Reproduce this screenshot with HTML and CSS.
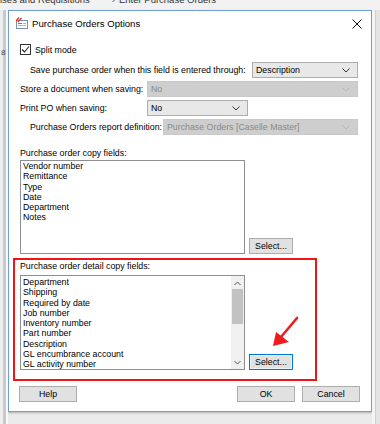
FILE: index.html
```html
<!DOCTYPE html>
<html lang="en">

<head>
    <meta charset="UTF-8">
    <meta name="viewport" content="width=device-width, initial-scale=1.0">
    <link rel="stylesheet" href="styles.css">
</head>

<body>
    <div class="app">
        <div class="crumbs">
            <span>ises and Requisitions</span>
            <span class="sep">›</span>
            <span>Enter Purchase Orders</span>
        </div>
        <div class="desk">
            <div class="side-left"><span class="side-num">8</span></div>

            <div class="dialog">
                <div class="titlebar">
                    <svg class="app-icon" width="13" height="12" viewBox="0 0 13 12">
                        <rect x="1.5" y="3.5" width="11" height="8" fill="#fff" stroke="#7b8fae" />
                        <line x1="3" y1="6.5" x2="7" y2="6.5" stroke="#4d7cc4" />
                        <line x1="3" y1="8.5" x2="11" y2="8.5" stroke="#9fb6d8" />
                        <line x1="8" y1="6.5" x2="11" y2="6.5" stroke="#9fb6d8" />
                        <line x1="1" y1="4" x2="4" y2="0.5" stroke="#d9342b" stroke-width="1.2" />
                        <line x1="3" y1="5" x2="6.5" y2="1" stroke="#d9342b" stroke-width="1.2" />
                    </svg>
                    <span class="title">Purchase Orders Options</span>
                    <svg class="close" width="10" height="10" viewBox="0 0 10 10">
                        <path d="M0.5 0.5 L9.5 9.5 M9.5 0.5 L0.5 9.5" stroke="#111" stroke-width="1" />
                    </svg>
                </div>

                <div class="content">
                    <div class="check-row">
                        <span class="checkbox">
                            <svg width="9" height="9" viewBox="0 0 9 9">
                                <path d="M1 4.5 L3.5 7 L8 1.5" fill="none" stroke="#222" stroke-width="1.1" />
                            </svg>
                        </span>
                        <span>Split mode</span>
                    </div>

                    <div class="field-row indent">
                        <label class="label-save">Save purchase order when this field is entered through:</label>
                        <div class="combo combo-save">
                            <span>Description</span>
                            <svg class="chev" width="8" height="5" viewBox="0 0 8 5">
                                <path d="M0.5 0.5 L4 4 L7.5 0.5" fill="none" stroke="#333" />
                            </svg>
                        </div>
                    </div>

                    <div class="field-row">
                        <label class="label-store">Store a document when saving:</label>
                        <div class="combo combo-store disabled">
                            <span>No</span>
                            <svg class="chev" width="8" height="5" viewBox="0 0 8 5">
                                <path d="M0.5 0.5 L4 4 L7.5 0.5" fill="none" stroke="#b8b8b8" />
                            </svg>
                        </div>
                    </div>

                    <div class="field-row">
                        <label class="label-store">Print PO when saving:</label>
                        <div class="combo combo-print">
                            <span>No</span>
                            <svg class="chev" width="8" height="5" viewBox="0 0 8 5">
                                <path d="M0.5 0.5 L4 4 L7.5 0.5" fill="none" stroke="#333" />
                            </svg>
                        </div>
                    </div>

                    <div class="field-row indent">
                        <label class="label-report">Purchase Orders report definition:</label>
                        <div class="combo combo-report disabled">
                            <span>Purchase Orders [Caselle Master]</span>
                            <svg class="chev" width="8" height="5" viewBox="0 0 8 5">
                                <path d="M0.5 0.5 L4 4 L7.5 0.5" fill="none" stroke="#b8b8b8" />
                            </svg>
                        </div>
                    </div>

                    <div class="group-label copy-label">Purchase order copy fields:</div>
                    <div class="list-group">
                        <ul class="listbox">
                            <li>Vendor number</li>
                            <li>Remittance</li>
                            <li>Type</li>
                            <li>Date</li>
                            <li>Department</li>
                            <li>Notes</li>
                        </ul>
                        <button class="btn btn-select">Select...</button>
                    </div>

                    <div class="highlight">
                        <div class="group-label">Purchase order detail copy fields:</div>
                        <div class="list-group detail">
                            <div class="listbox scrolled">
                                <ul class="items">
                                    <li>Department</li>
                                    <li>Shipping</li>
                                    <li>Required by date</li>
                                    <li>Job number</li>
                                    <li>Inventory number</li>
                                    <li>Part number</li>
                                    <li>Description</li>
                                    <li>GL encumbrance account</li>
                                    <li>GL activity number</li>
                                </ul>
                                <div class="scrollbar">
                                    <svg width="7" height="5" viewBox="0 0 7 5">
                                        <path d="M0.5 4 L3.5 1 L6.5 4" fill="none" stroke="#555" />
                                    </svg>
                                    <div class="track"><div class="thumb"></div></div>
                                    <svg width="7" height="5" viewBox="0 0 7 5">
                                        <path d="M0.5 1 L3.5 4 L6.5 1" fill="none" stroke="#555" />
                                    </svg>
                                </div>
                            </div>
                            <button class="btn btn-select focused">Select...</button>
                        </div>
                        <svg class="arrow" width="32" height="36" viewBox="0 0 32 36">
                            <line x1="29" y1="4" x2="13" y2="23" stroke="#ee1c1c" stroke-width="2.6" stroke-linecap="round" />
                            <polygon points="5,32 8,18 21,28" fill="#ee1c1c" />
                        </svg>
                    </div>

                    <div class="actions">
                        <button class="btn btn-wide">Help</button>
                        <div class="actions-right">
                            <button class="btn btn-wide">OK</button>
                            <button class="btn btn-wide">Cancel</button>
                        </div>
                    </div>
                </div>
            </div>

            <div class="side-right"></div>
        </div>
    </div>
</body>

</html>
```

FILE: styles.css
```css
:root {
    --text-color: #000;
    --border-color: #adadad;
    --button-bg: #e1e1e1;
    --combo-bg: #e8e8e8;
    --disabled-bg: #cecece;
    --disabled-text: #8a8a8a;
    --frame-color: #6f9fd6;
    --mark-color: #f01414;
}

* {
    margin: 0;
    padding: 0;
    box-sizing: border-box;
}

body {
    font-family: "Liberation Sans", Arial, sans-serif;
    font-size: 8.8px;
    color: var(--text-color);
    background: #ebebeb;
    width: 380px;
    height: 424px;
    overflow: hidden;
}

.app {
    display: flex;
    flex-direction: column;
    height: 424px;
}

.crumbs {
    height: 10px;
    overflow: hidden;
    display: flex;
    gap: 26px;
    font-size: 9.5px;
    line-height: 10px;
    color: #333;
    background: #f2f2f2;
}

.crumbs span {
    margin-top: -5px;
}

.crumbs .sep {
    margin-left: -4px;
    margin-right: -22px;
}

.desk {
    flex: 1;
    display: flex;
    align-items: flex-start;
}

.side-left {
    width: 8px;
    height: 100%;
    background: #eeeeee;
    border-right: 2px solid #f8f8f8;
    box-shadow: inset -3px 0 0 #c9c9c9;
    position: relative;
}

.side-num {
    position: absolute;
    top: 38px;
    left: 1px;
    font-size: 8px;
    color: #444;
}

.side-right {
    flex: 1;
    height: 100%;
    background: #e4e4e4;
    border-left: 3px solid #f4f4f4;
    box-shadow: inset 1px 0 0 #cfcfcf;
}

.dialog {
    width: 364px;
    height: 402px;
    background: #fff;
    border: 1px solid var(--frame-color);
    box-shadow: 0 1px 2px rgba(0, 0, 0, 0.25);
    display: flex;
    flex-direction: column;
}

.titlebar {
    height: 24px;
    display: flex;
    align-items: center;
    padding: 0 9px 0 6px;
    gap: 4px;
}

.title {
    flex: 1;
    font-size: 9.6px;
    padding-top: 1px;
}

.close {
    margin-top: 1px;
}

.content {
    padding: 0 13px 0 11px;
    display: flex;
    flex-direction: column;
}

.check-row {
    margin-top: 8px;
    height: 13px;
    display: flex;
    align-items: center;
    gap: 4px;
}

.checkbox {
    width: 11px;
    height: 11px;
    border: 1px solid #333;
    display: flex;
    align-items: center;
    justify-content: center;
    background: #fff;
}

.field-row {
    margin-top: 3px;
    height: 16px;
    display: flex;
    align-items: center;
}

.check-row + .field-row {
    margin-top: 6px;
}

.field-row.indent {
    padding-left: 10px;
}

.label-save {
    width: 222px;
}

.label-store {
    width: 127px;
}

.label-report {
    width: 133px;
}

.combo {
    height: 16px;
    display: flex;
    align-items: center;
    justify-content: space-between;
    padding: 0 7px 0 3px;
    border: 1px solid var(--border-color);
    background: var(--combo-bg);
}

.combo.disabled {
    background: var(--disabled-bg);
    border-color: #c9c9c9;
    color: var(--disabled-text);
}

.combo-save {
    width: 106px;
}

.combo-store {
    width: 211px;
}

.combo-print {
    width: 101px;
}

.combo-report {
    width: 195px;
}

.group-label {
    height: 10px;
    line-height: 10px;
}

.copy-label {
    margin-top: 13px;
}

.list-group {
    margin-top: 2px;
    display: flex;
    align-items: flex-end;
    gap: 4px;
}

.listbox {
    width: 225px;
    height: 94px;
    border: 1px solid #8f8f8f;
    background: #fff;
    list-style: none;
    padding: 0 2px;
    line-height: 10.25px;
    overflow: hidden;
}

.listbox.scrolled {
    height: 95px;
    padding: 0;
    display: flex;
}

.items {
    flex: 1;
    list-style: none;
    padding: 1px 2px 0;
    line-height: 10.25px;
}

.scrollbar {
    width: 13px;
    background: #f0f0f0;
    display: flex;
    flex-direction: column;
    align-items: center;
    padding: 5px 0 4px;
}

.track {
    flex: 1;
    width: 100%;
    padding: 3px 1px 0;
}

.thumb {
    height: 35px;
    background: #c2c2c2;
}

.btn {
    font-family: inherit;
    font-size: 8.8px;
    color: var(--text-color);
    background: var(--button-bg);
    border: 1px solid var(--border-color);
    height: 16px;
}

.btn-select {
    width: 44px;
}

.btn.focused {
    border-color: #0078d7;
    box-shadow: inset 0 0 0 1px #e5f1fb;
}

.highlight {
    position: relative;
    margin-top: 4px;
    margin-left: -7px;
    width: 304px;
    height: 123px;
    border: 2px solid var(--mark-color);
    padding: 1px 0 0 5px;
}

.list-group.detail {
    margin-top: 4px;
}

.arrow {
    position: absolute;
    left: 253px;
    top: 54px;
}

.actions {
    margin-top: 5px;
    display: flex;
    justify-content: space-between;
    margin-left: -1px;
    margin-right: -2px;
}

.actions-right {
    display: flex;
    gap: 7px;
}

.btn-wide {
    width: 58px;
}
```
